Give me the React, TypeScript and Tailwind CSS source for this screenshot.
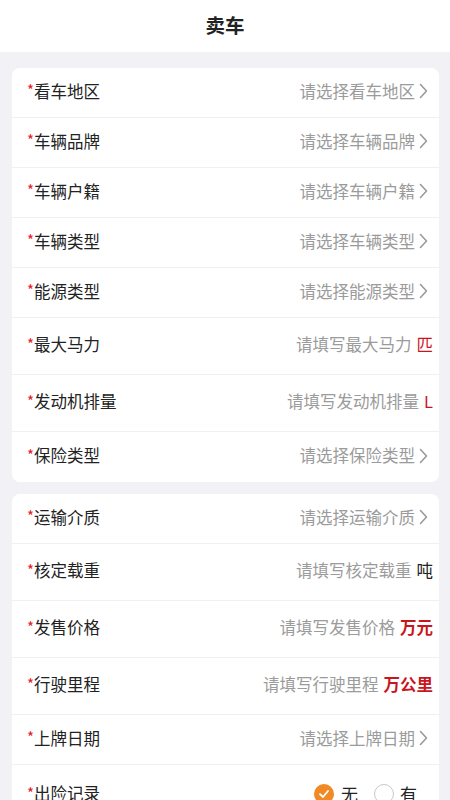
import React from "react";

type Row =
  | { kind: "select"; label: string; placeholder: string }
  | { kind: "input"; label: string; placeholder: string; unit: string; unitClass: string }
  | { kind: "radio"; label: string };

const Chevron = () => (
  <svg width="9" height="16" viewBox="0 0 9 16" className="ml-[4px] mr-[5px] shrink-0">
    <polyline points="1.5,1.5 7.5,8 1.5,14.5" fill="none" stroke="#9a9a9a" strokeWidth="1.6" strokeLinecap="round" strokeLinejoin="round" />
  </svg>
);

const card1: Row[] = [
  { kind: "select", label: "看车地区", placeholder: "请选择看车地区" },
  { kind: "select", label: "车辆品牌", placeholder: "请选择车辆品牌" },
  { kind: "select", label: "车辆户籍", placeholder: "请选择车辆户籍" },
  { kind: "select", label: "车辆类型", placeholder: "请选择车辆类型" },
  { kind: "select", label: "能源类型", placeholder: "请选择能源类型" },
  { kind: "input", label: "最大马力", placeholder: "请填写最大马力", unit: "匹", unitClass: "text-[#c8161d]" },
  { kind: "input", label: "发动机排量", placeholder: "请填写发动机排量", unit: "L", unitClass: "text-[#c8161d]" },
  { kind: "select", label: "保险类型", placeholder: "请选择保险类型" },
];

const card2: Row[] = [
  { kind: "select", label: "运输介质", placeholder: "请选择运输介质" },
  { kind: "input", label: "核定载重", placeholder: "请填写核定载重", unit: "吨", unitClass: "text-[#222222]" },
  { kind: "input", label: "发售价格", placeholder: "请填写发售价格", unit: "万元", unitClass: "text-[#c8161d] font-bold" },
  { kind: "input", label: "行驶里程", placeholder: "请填写行驶里程", unit: "万公里", unitClass: "text-[#c8161d] font-bold" },
  { kind: "select", label: "上牌日期", placeholder: "请选择上牌日期" },
  { kind: "radio", label: "出险记录" },
];

function RowView({ row, last }: { row: Row; last: boolean }) {
  const h = row.kind === "input" ? "h-[57px]" : row.kind === "radio" ? "h-[60px]" : "h-[50px]";
  return (
    <div className={`flex items-center justify-between pl-[15px] pr-[6px] pb-[3px] ${h} ${last ? "" : "border-b border-[#f0f0f2]"}`}>
      <div className="flex items-center text-[16.5px] text-[#222222] leading-none">
        <span className="text-[#e5191c] text-[15px] -mt-[3px]">*</span>
        <span>{row.label}</span>
      </div>
      {row.kind === "select" && (
        <div className="flex items-center text-[16.5px] text-[#9b9b9b] leading-none">
          <span>{row.placeholder}</span>
          <Chevron />
        </div>
      )}
      {row.kind === "input" && (
        <div className="flex items-center text-[16.5px] leading-none">
          <span className="text-[#9b9b9b]">{row.placeholder}</span>
          <span className={`ml-[5px] ${row.unitClass}`}>{row.unit}</span>
        </div>
      )}
      {row.kind === "radio" && (
        <div className="flex items-center text-[17px] text-[#222222] leading-none pr-[16px]">
          <span className="w-[20px] h-[20px] rounded-full bg-[#f08a24] flex items-center justify-center">
            <svg width="12" height="12" viewBox="0 0 12 12">
              <polyline points="2,6.2 5,9 10,3" fill="none" stroke="#ffffff" strokeWidth="1.8" strokeLinecap="round" strokeLinejoin="round" />
            </svg>
          </span>
          <span className="ml-[7px]">无</span>
          <span className="ml-[16px] w-[20px] h-[20px] rounded-full border border-[#c8c8c8] bg-white" />
          <span className="ml-[6px]">有</span>
        </div>
      )}
    </div>
  );
}

export default function App() {
  return (
    <div
      className="w-[450px] h-[800px] overflow-hidden bg-[#f2f2f6]"
      style={{ fontFamily: '"Noto Sans CJK SC", "Noto Sans", sans-serif' }}
    >
      <div className="h-[52px] bg-white flex items-center justify-center pb-[3px]">
        <span className="text-[19.5px] font-bold text-[#222222] leading-none">卖车</span>
      </div>
      <div className="pl-[12px] pr-[11px] pt-[16px]">
        <div className="bg-white rounded-[8px] overflow-hidden">
          {card1.map((r, i) => (
            <RowView key={r.label} row={r} last={i === card1.length - 1} />
          ))}
        </div>
        <div className="bg-white rounded-[8px] overflow-hidden mt-[12px]">
          {card2.map((r, i) => (
            <RowView key={r.label} row={r} last={i === card2.length - 1} />
          ))}
        </div>
      </div>
    </div>
  );
}
